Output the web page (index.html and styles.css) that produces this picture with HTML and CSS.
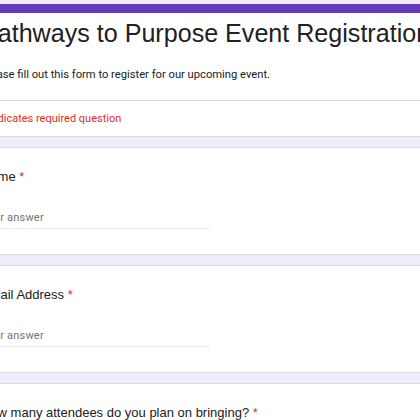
FILE: index.html
```html
<!DOCTYPE html>
<html>
<head>
<meta charset="utf-8">
<link rel="stylesheet" href="styles.css">
</head>
<body>
<div class="page">
  <section class="card title-card">
    <div class="title-head">
      <h1 class="form-title">Pathways to Purpose Event Registration</h1>
      <p class="form-desc">Please fill out this form to register for our upcoming event.</p>
    </div>
    <div class="required-note">* Indicates required question</div>
  </section>
  <section class="card question">
    <div class="q-label">Name <span class="star">*</span></div>
    <div class="answer"><span class="placeholder">Your answer</span></div>
  </section>
  <section class="card question">
    <div class="q-label">Email Address <span class="star">*</span></div>
    <div class="answer"><span class="placeholder">Your answer</span></div>
  </section>
  <section class="card question">
    <div class="q-label">How many attendees do you plan on bringing? <span class="star">*</span></div>
    <div class="answer"><span class="placeholder">Your answer</span></div>
  </section>
</div>
</body>
</html>
```

FILE: styles.css
```css
html, body {
  margin: 0;
  padding: 0;
  background: #f0ebf8;
  overflow: hidden;
}
.page {
  margin-left: -39px;
  width: 492px;
  padding-top: 4px;
  display: flex;
  flex-direction: column;
  gap: 10px;
}
.card {
  background: #ffffff;
  border: 1px solid #dadce0;
  border-radius: 6px;
}
.title-card {
  border-top: 9px solid #673ab7;
  border-radius: 6px;
}
.title-head {
  padding: 4px 19px 17px 19px;
}
.form-title {
  margin: 0;
  font-family: "Liberation Sans", Arial, sans-serif;
  font-weight: 400;
  font-size: 25.1px;
  line-height: 32px;
  color: #202124;
  white-space: nowrap;
}
.form-desc {
  margin: 18px 0 0 0;
  font-family: Roboto, "Liberation Sans", sans-serif;
  font-size: 11.2px;
  line-height: 16px;
  color: #202124;
}
.required-note {
  border-top: 1px solid #dadce0;
  padding: 10px 19px 9px 19px;
  font-family: Roboto, "Liberation Sans", sans-serif;
  font-size: 11px;
  line-height: 16px;
  color: #d93025;
}
.question {
  padding: 20px 19px 25px 19px;
}
.q-label {
  font-family: "Liberation Sans", Arial, sans-serif;
  font-size: 13px;
  line-height: 18px;
  color: #202124;
}
.star {
  color: #d93025;
}
.answer {
  margin-top: 24px;
  width: 229px;
  border-bottom: 1px solid #ebebeb;
  padding-bottom: 2px;
}
.placeholder {
  font-family: Roboto, "Liberation Sans", sans-serif;
  font-size: 11px;
  line-height: 16px;
  letter-spacing: 0.2px;
  color: #70757a;
  display: block;
}
```
